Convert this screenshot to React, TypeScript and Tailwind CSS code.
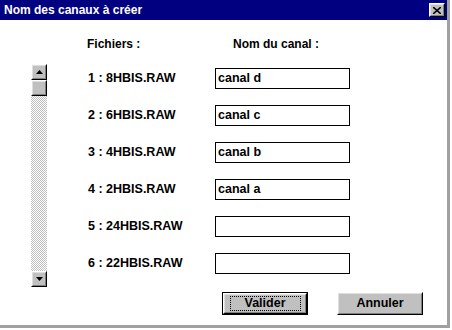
const rows = [
  { file: "1 : 8HBIS.RAW", name: "canal d" },
  { file: "2 : 6HBIS.RAW", name: "canal c" },
  { file: "3 : 4HBIS.RAW", name: "canal b" },
  { file: "4 : 2HBIS.RAW", name: "canal a" },
  { file: "5 : 24HBIS.RAW", name: "" },
  { file: "6 : 22HBIS.RAW", name: "" },
];

function Raised({ className = "", children }: { className?: string; children?: React.ReactNode }) {
  return (
    <div className={`border border-t-white border-l-white border-r-black border-b-black bg-[#c0c0c0] ${className}`}>
      <div className="w-full h-full border border-t-[#dfdfdf] border-l-[#dfdfdf] border-r-[#808080] border-b-[#808080] flex items-center justify-center">
        {children}
      </div>
    </div>
  );
}

function Arrow({ up }: { up?: boolean }) {
  return (
    <svg width="7" height="4" viewBox="0 0 7 4">
      <path d={up ? "M3.5 0 L7 4 L0 4 Z" : "M0 0 L7 0 L3.5 4 Z"} fill="#000" />
    </svg>
  );
}

export default function App() {
  return (
    <div
      className="w-[452px] h-[330px] bg-white flex flex-col overflow-hidden select-none"
      style={{ fontFamily: '"Liberation Sans", Arial, sans-serif' }}
    >
      <div className="flex-1 flex flex-col border-r-[3px] border-b-[3px] border-r-[#a0a0a0] border-b-[#a0a0a0] mr-[2px] mb-[2px]">
        {/* Title bar */}
        <div className="h-[20px] bg-[#000080] flex items-center justify-between pl-[4px] pr-[2px]">
          <span className="text-white font-bold text-[12px]">Nom des canaux à créer</span>
          <Raised className="w-[16px] h-[14px]">
            <svg width="8" height="7" viewBox="0 0 8 7">
              <path d="M0 0 L8 7 M8 0 L0 7" stroke="#000" strokeWidth="1.6" />
            </svg>
          </Raised>
        </div>

        {/* Body */}
        <div className="flex-1 flex">
          {/* Scrollbar */}
          <div className="ml-[31px] mt-[44px] w-[16px] h-[223px] flex flex-col bg-[repeating-conic-gradient(#c0c0c0_0_25%,#ffffff_0_50%)] bg-[length:2px_2px]">
            <Raised className="w-[16px] h-[16px]">
              <Arrow up />
            </Raised>
            <Raised className="w-[16px] h-[16px]" />
            <div className="flex-1" />
            <Raised className="w-[16px] h-[16px]">
              <Arrow />
            </Raised>
          </div>

          <div className="flex flex-col">
            <div className="flex pt-[17px] h-[31px] text-[12px] font-bold text-black leading-[14px]">
              <span className="ml-[40px] w-[146px]">Fichiers :</span>
              <span>Nom du canal :</span>
            </div>
            <div className="flex flex-col mt-[17px] gap-[16px]">
              {rows.map((r) => (
                <div key={r.file} className="flex items-center h-[21px]">
                  <span className="ml-[41px] w-[127px] text-[12.5px] font-bold text-black">{r.file}</span>
                  <div className="w-[135px] h-[21px] border border-black bg-white flex items-center px-[2px] text-[12.5px] font-bold text-black">
                    {r.name}
                  </div>
                </div>
              ))}
            </div>
            <div className="flex mt-[18px] ml-[175px] gap-[29px]">
              <div className="border border-black">
                <Raised className="w-[84px] h-[21px]">
                  <span className="text-[12.5px] font-bold text-black border border-dotted border-black px-[14px] leading-[13px]">Valider</span>
                </Raised>
              </div>
              <Raised className="w-[86px] h-[23px]">
                <span className="text-[12.5px] font-bold text-black">Annuler</span>
              </Raised>
            </div>
          </div>
        </div>
      </div>
    </div>
  );
}
